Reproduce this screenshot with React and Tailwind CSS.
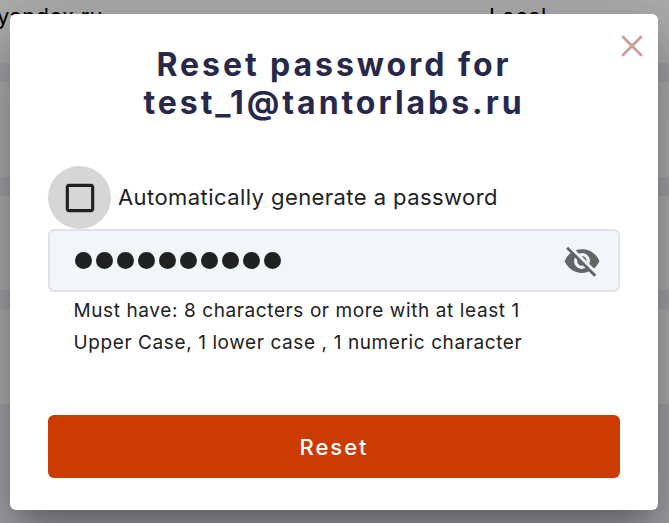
import React from 'react'
import { MdCheckBoxOutlineBlank, MdVisibilityOff } from 'react-icons/md'

const rows = [
  { id: 1, email: 'yandex.ru', type: 'Local' },
  { id: 2 },
  { id: 3 },
  { id: 4 },
]

const UsersTable = () => (
  <div className="flex h-full flex-col gap-[19px] bg-[#a1a3a8]">
    {rows.map((row, i) => (
      <div
        key={row.id}
        className={
          i === 0
            ? 'flex h-[63px] shrink-0 bg-[#adadad] text-[22px] leading-[32px] tracking-[0.3px] text-black'
            : 'h-[94.67px] shrink-0 bg-[#adadad]'
        }
      >
        <span className="-ml-[3px] w-[492px]">{row.email}</span>
        <span>{row.type}</span>
      </div>
    ))}
  </div>
)

const PasswordField = ({ length }) => (
  <div className="flex h-[63px] items-center justify-between rounded-[6px] border-2 border-[#e1e2e8] bg-[#f2f5fa] pl-[25px] pr-[17px]">
    <div className="flex gap-1">
      {Array.from({ length }).map((_, i) => (
        <span key={i} className="size-[17px] rounded-full bg-[#202221]"></span>
      ))}
    </div>
    <button type="button" aria-label="Show password">
      <MdVisibilityOff className="size-[38px] text-[#646665]" />
    </button>
  </div>
)

const ResetPasswordDialog = () => (
  <div className="relative h-[496px] w-[648px] rounded-[6px] bg-white px-[38px] pt-[32px] shadow-[0_17px_24px_-11px_rgba(0,0,0,0.24),0_38px_60px_5px_rgba(0,0,0,0.17),0_14px_73px_13px_rgba(0,0,0,0.12)]">
    <button type="button" aria-label="Close" className="absolute right-[15px] top-[21px]">
      <svg className="size-[22px]" viewBox="0 0 22 22" fill="none" stroke="#c99d9b" strokeWidth="2.8" strokeLinecap="round">
        <path d="M2 2l18 18M20 2L2 20" />
      </svg>
    </button>

    <h2 className="text-center text-[32px] font-bold leading-[38px] tracking-[2.95px] text-[#28284a]">
      Reset password for
      <br />
      test_1@tantorlabs.ru
    </h2>

    <div className="mt-[44px] flex items-center">
      <span className="flex size-[63px] items-center justify-center rounded-full bg-[#d6d6d6]">
        <MdCheckBoxOutlineBlank className="size-[38px] text-[#202020]" />
      </span>
      <span className="ml-[7px] text-[22px] tracking-[0.43px]">Automatically generate a password</span>
    </div>

    <PasswordField length={10} />

    <p className="mt-[3px] pl-[25.5px] text-[19px] leading-[32px] tracking-[0.6px]">
      Must have: 8 characters or more with at least 1
      <br />
      Upper Case, 1 lower case , 1 numeric character
    </p>

    <button
      type="button"
      className="mt-[56px] h-[63px] w-full rounded-[6px] bg-[#cc3b02] pt-px text-[22px] font-medium tracking-[2px] text-white"
    >
      Reset
    </button>
  </div>
)

const App = () => {
  return (
    <div className="relative h-[523px] w-[669px] overflow-hidden font-['Inter',sans-serif] text-[#202221]">
      <UsersTable />
      <div className="absolute inset-0 pl-[10px] pt-[14px]">
        <ResetPasswordDialog />
      </div>
    </div>
  )
}

export default App
